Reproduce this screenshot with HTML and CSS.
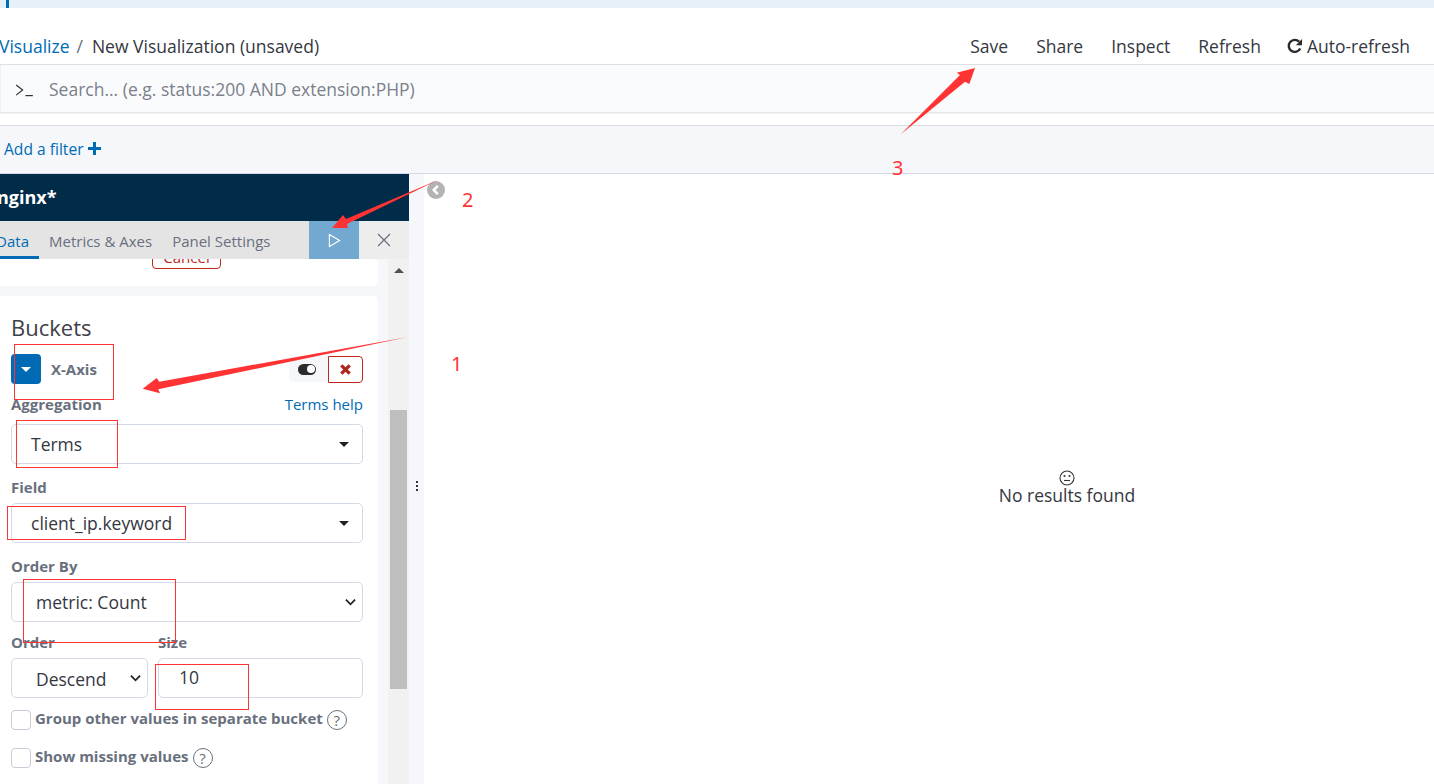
FILE: index.html
```html
<!doctype html>
<html lang="en">
<head>
  <meta charset="utf-8">
  <title>New Visualization (unsaved)</title>
  <link rel="stylesheet" href="styles.css">
</head>
<body>
  <div class="banner"><span class="banner-mark"></span></div>

  <nav class="topnav">
    <div class="crumbs">
      <a class="link">Visualize</a>
      <span class="crumb-sep">/</span>
      <span>New Visualization (unsaved)</span>
    </div>
    <div class="menu">
      <span>Save</span>
      <span>Share</span>
      <span>Inspect</span>
      <span>Refresh</span>
      <span class="menu-auto">
        <svg class="refresh-icon" viewBox="0 0 16 16"><path d="M13.2 10.4A6 6 0 1 1 12.2 3.8" fill="none" stroke="#2b2b2b" stroke-width="2.4"/><path d="M15 1v6.2H8.800z" fill="#2b2b2b"/></svg>
        Auto-refresh
      </span>
    </div>
  </nav>

  <div class="searchbar">
    <svg class="prompt" viewBox="0 0 20 14"><path d="M1 1l7 5.500-7 5.500" fill="none" stroke="#333" stroke-width="1.300"/><path d="M11 12.500h8" stroke="#333" stroke-width="1.300"/></svg>
    <span class="placeholder">Search... (e.g. status:200 AND extension:PHP)</span>
  </div>

  <div class="filterbar">
    <a class="link">Add a filter</a>
    <svg class="plus" viewBox="0 0 13 13"><path d="M5 0h3v5h5v3H8v5H5V8H0V5h5z" fill="#006bb4"/></svg>
  </div>

  <main class="workspace">
    <aside class="sidebar">
      <div class="index-title">nginx*</div>
      <div class="tabs">
        <span class="tab tab-active">Data</span>
        <span class="tab">Metrics &amp; Axes</span>
        <span class="tab">Panel Settings</span>
        <span class="tab-spacer"></span>
        <button class="run-btn">
          <svg viewBox="0 0 14 16" width="13" height="15"><path d="M1.500 1.500l11 6.500-11 6.500z" fill="none" stroke="#fff" stroke-width="1.200"/></svg>
        </button>
        <button class="close-btn">
          <svg viewBox="0 0 14 14" width="14" height="14"><path d="M1 1l12 12M13 1L1 13" stroke="#69707d" stroke-width="1.200"/></svg>
        </button>
      </div>
      <div class="scrollarea">
        <div class="panes">
          <section class="card card-metrics">
            <button class="cancel-btn">Cancel</button>
          </section>
          <section class="card card-buckets">
            <h2 class="card-title">Buckets</h2>
            <div class="agg-head">
              <span class="agg-toggle"><i class="caret caret-white"></i></span>
              <span class="agg-name">X-Axis</span>
              <span class="agg-actions">
                <span class="switch-btn"><i class="switch"></i></span>
                <span class="remove-btn">
                  <svg viewBox="0 0 10 10" width="11" height="11"><path d="M1.200 1.200l7.600 7.600M8.800 1.200L1.200 8.800" stroke="#b0261d" stroke-width="3"/></svg>
                </span>
              </span>
            </div>

            <div class="field-head">
              <label class="field-label">Aggregation</label>
              <a class="link help-link">Terms help</a>
            </div>
            <div class="combo"><span>Terms</span><i class="caret"></i></div>

            <label class="field-label field-gap">Field</label>
            <div class="combo"><span>client_ip.keyword</span><i class="caret"></i></div>

            <label class="field-label field-gap">Order By</label>
            <select class="native-select"><option>metric: Count</option></select>

            <div class="order-row">
              <div class="order-col">
                <label class="field-label">Order</label>
                <select class="native-select"><option>Descend</option></select>
              </div>
              <div class="size-col">
                <label class="field-label">Size</label>
                <input class="size-input" value="10">
              </div>
            </div>

            <div class="check-row check-first">
              <span class="checkbox"></span>
              <span class="check-label">Group other values in separate bucket</span>
              <span class="help-dot">?</span>
            </div>
            <div class="check-row check-second">
              <span class="checkbox"></span>
              <span class="check-label">Show missing values</span>
              <span class="help-dot">?</span>
            </div>
          </section>
        </div>
        <div class="scrollbar">
          <i class="scroll-up"></i>
          <i class="scroll-thumb"></i>
        </div>
      </div>
    </aside>

    <div class="resizer">
      <i></i><i></i><i></i>
    </div>

    <section class="results">
      <svg class="smiley" viewBox="0 0 16 16"><circle cx="8" cy="8" r="7" fill="none" stroke="#333" stroke-width="1.100"/><circle cx="5.500" cy="6" r="1" fill="#333"/><circle cx="10.500" cy="6" r="1" fill="#333"/><path d="M5 10.500h6" stroke="#333" stroke-width="1.100"/></svg>
      <p class="no-results">No results found</p>
    </section>
  </main>

  <span class="collapse-btn">
    <svg viewBox="0 0 18 18" width="18" height="18"><circle cx="9" cy="9" r="9" fill="#b3b3b3"/><path d="M10.800 4.800L6.800 9l4 4.200" fill="none" stroke="#fff" stroke-width="2.600"/></svg>
  </span>

  <!-- red markup drawn on top of the screenshot -->
  <svg class="markup" viewBox="0 0 1434 784" width="1434" height="784">
    <g fill="none" stroke="#f33" stroke-width="1">
      <rect x="14.500" y="344.500" width="99" height="55"/>
      <rect x="16.500" y="420.500" width="101" height="47"/>
      <rect x="7.500" y="506.500" width="178" height="33"/>
      <rect x="23.500" y="579.500" width="152" height="63"/>
      <rect x="155.500" y="664.500" width="93" height="45"/>
    </g>
    <g fill="#f33">
      <path d="M408 337L159.300 381.700l-2.600-3.700-14 10.700 17.300 4.600-1.700-4z"/>
      <path d="M438 180L346 219l-3-4-11 13 16 0-1-4z"/>
      <path d="M900.500 134.500L960 75l-3.300-2.300L975 68l-5.700 16-4.300-2.300z"/>
    </g>
  </svg>
  <span class="mark-num mark-1">1</span>
  <span class="mark-num mark-2">2</span>
  <span class="mark-num mark-3">3</span>
</body>
</html>
```

FILE: styles.css
```css
:root {
  --blue:#006bb4; --text:#343741; --muted:#69707d; --line:#d3dae6;
  --wash:#f5f7fa; --navy:#002b49; --mark:#f33;
}
html,body{margin:0;padding:0;background:#fff;color:var(--text)}
body{
  font-family:"Open Sans",sans-serif;font-size:17.5px;
  width:1434px;height:784px;overflow:hidden;position:relative
}
.link{color:var(--blue);text-decoration:none}

.banner{height:8px;background:#e6f0f8;padding-left:6px}
.banner-mark{display:block;width:3px;height:8px;background:var(--blue)}

.topnav{
  height:57px;box-sizing:border-box;padding:0 24px 0 0;
  display:flex;align-items:flex-end;justify-content:space-between;
  border-bottom:1px solid #dcdfe5;line-height:24px
}
.crumbs,.menu{padding-bottom:6px;display:flex}
.crumbs{margin-left:-1px}
.crumb-sep{color:var(--muted);margin:0 9px 0 7px}
.menu{gap:28px}
.menu-auto{display:flex;align-items:center;gap:4px;margin-left:-2px}
.refresh-icon{width:16px;height:16px}

.searchbar{
  height:48px;box-sizing:border-box;background:#fafbfd;
  border-bottom:1px solid #e3e5ea;border-left:1px solid #eef0f4;
  display:flex;align-items:center;padding-left:14px;
  box-shadow:0 1px 1px rgba(0,0,0,.04)
}
.prompt{width:19px;height:13px;margin-top:3px}
.placeholder{color:#7b808a;margin-left:15px}

.filterbar{
  height:49px;box-sizing:border-box;margin-top:12px;background:var(--wash);
  border-top:1px solid #d9dce3;border-bottom:1px solid #d3dae6;
  display:flex;align-items:center;padding:0 0 2px 4px;font-size:15.6px
}
.plus{width:13px;height:13px;margin-left:4px}

.workspace{display:flex;height:610px}
.sidebar{width:409px;display:flex;flex-direction:column;overflow:hidden}
.index-title{
  height:47px;background:var(--navy);color:#fff;font-weight:700;font-size:18px;
  line-height:47px;margin-left:-3px
}
.tabs{height:38px;display:flex;background:#e4e4e4;flex:none}
.tab{
  font-size:15px;color:var(--muted);line-height:40px;padding:0 10px;
  box-sizing:border-box;height:38px;white-space:nowrap
}
.tab-active{
  color:var(--blue);border-bottom:3px solid var(--blue);
  width:39px;padding:0 10px 0 0;direction:rtl
}
.tab-spacer{flex:1}
.run-btn,.close-btn{width:50px;height:38px;border:0;padding:0;display:flex;align-items:center;justify-content:center}
.run-btn{background:#73a9d0}
.close-btn{background:#ededed}

.scrollarea{flex:1;display:flex;min-height:0;background:var(--wash)}
.panes{flex:1;overflow:hidden;padding-right:10px}
.scrollbar{width:21px;background:#f1f1f1;padding:0 2px;box-sizing:border-box;display:flex;flex-direction:column;align-items:center}
.scroll-up{
  margin-top:9px;width:0;height:0;
  border:5px solid transparent;border-top:0;border-bottom:5px solid #505050
}
.scroll-thumb{width:17px;height:279px;background:#bebebe;margin-top:137px}

.card{background:#fff;border-radius:0 5px 5px 0}
.card-metrics{height:27px;position:relative}
.cancel-btn{
  position:absolute;left:152px;top:-18px;width:69px;height:28px;box-sizing:border-box;
  background:#fff;border:1px solid #bd271e;border-radius:4px;color:#bd271e;
  font:15px "Open Sans",sans-serif;padding:3px 0 0
}
.card-buckets{margin-top:10px;padding:19px 15px 40px 11px;height:540px;box-sizing:border-box}
.card-title{font-size:22px;font-weight:400;line-height:24px;margin:0 0 15px 0;color:#3f4148}

.agg-head{display:flex;align-items:center;height:30px}
.agg-toggle{
  width:30px;height:30px;background:var(--blue);border-radius:4px;
  display:flex;align-items:center;justify-content:center
}
.agg-name{font-size:15px;font-weight:700;color:var(--muted);margin-left:10px}
.agg-actions{margin-left:auto;display:flex;align-items:center}
.switch-btn{
  width:39px;height:26px;background:var(--wash);border-radius:4px 0 0 4px;
  display:flex;align-items:center;justify-content:center;padding-right:3px;box-sizing:border-box
}
.switch{
  display:block;width:18px;height:11px;border-radius:6px;background:#2b2b2b;position:relative
}
.switch::after{content:"";position:absolute;right:1px;top:1.500px;width:8px;height:8px;border-radius:50%;background:#fff}
.remove-btn{
  width:35px;height:27px;box-sizing:border-box;border:1px solid #bd271e;border-radius:0 4px 4px 0;
  display:flex;align-items:center;justify-content:center
}

.field-head{display:flex;justify-content:space-between;margin-top:10px;height:20px;align-items:center;margin-bottom:10px}
.field-label{display:block;font-size:15px;font-weight:700;color:var(--muted);line-height:20px}
.field-gap{margin:13px 0 6px}
.help-link{font-size:15px}
.combo{
  height:40px;box-sizing:border-box;border:1px solid var(--line);border-radius:5px;
  display:flex;align-items:center;justify-content:space-between;padding:0 13px 0 19px
}
.caret{display:block;width:0;height:0;border:5px solid transparent;border-bottom:0;border-top:5px solid #222}
.caret-white{border-top-color:#fff}

.native-select,.size-input{
  width:100%;height:40px;box-sizing:border-box;background-color:#fff;
  border:1px solid var(--line);border-radius:5px;
  font:17.5px "Open Sans",sans-serif;color:var(--text)
}
.native-select{
  appearance:none;padding:0 0 0 24px;
  background-image:url("data:image/svg+xml,%3Csvg xmlns='http://www.w3.org/2000/svg' viewBox='0 0 12 8'%3E%3Cpath d='M1 1.500l5 5 5-5' fill='none' stroke='%23222' stroke-width='2'/%3E%3C/svg%3E");
  background-repeat:no-repeat;background-size:11px 8px;background-position:right 6px center
}
.size-input{padding:0 0 2px 20px}
.order-row{display:flex;gap:10px;margin-top:10px}
.order-col{width:137px}
.order-col .native-select{padding-top:2px}
.size-col{flex:1}
.order-row .field-label{margin-bottom:6px}

.check-row{display:flex;align-items:center;height:20px}
.check-first{margin-top:12px}
.check-second{margin-top:18px}
.checkbox{width:20px;height:20px;box-sizing:border-box;border:1px solid #c6ccd8;border-radius:4px;flex:none}
.check-label{font-size:15px;font-weight:700;color:var(--muted);margin-left:4px;line-height:18px;margin-bottom:4px}
.help-dot{
  width:18px;height:18px;border:1px solid var(--muted);border-radius:50%;margin-left:4px;
  font-size:15px;line-height:18px;text-align:center;color:var(--muted)
}

.resizer{
  width:15px;background:var(--wash);display:flex;flex-direction:column;
  align-items:center;justify-content:center;gap:2px;padding-top:14px;box-sizing:border-box
}
.resizer i{display:block;width:2px;height:2px;background:#333}

.results{
  flex:1;display:flex;flex-direction:column;align-items:center;
  padding:296px 0 0 276px
}
.smiley{width:16px;height:16px}
.no-results{margin:-1px 0 0;line-height:20px;color:var(--text)}

.collapse-btn{position:absolute;left:427px;top:180px;height:18px}
.markup{position:absolute;left:0;top:0;pointer-events:none}
.mark-num{position:absolute;color:var(--mark);font:20px "Noto Sans",sans-serif;line-height:24px}
.mark-1{left:451px;top:352px}
.mark-2{left:462px;top:188px}
.mark-3{left:892px;top:156px}
```
